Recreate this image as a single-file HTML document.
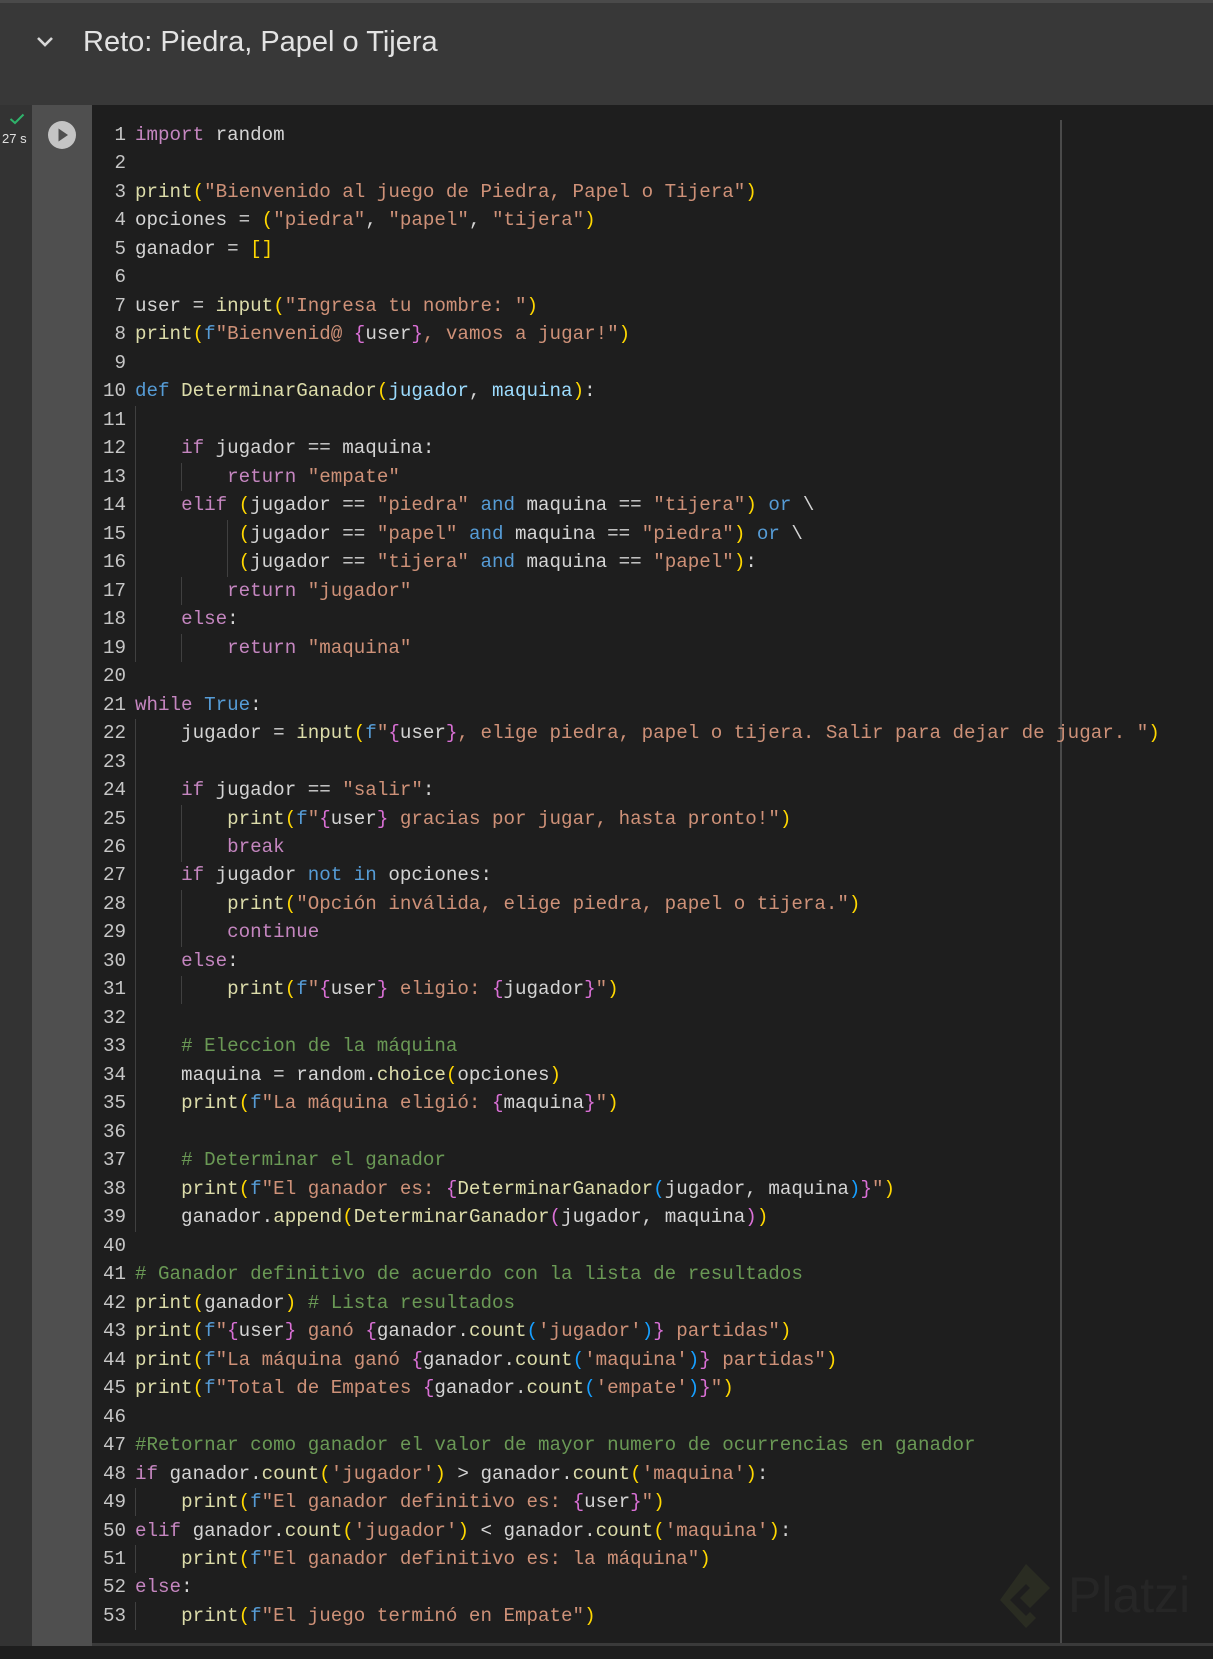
<!DOCTYPE html>
<html><head><meta charset="utf-8">
<style>
html,body{margin:0;padding:0;}
body{width:1213px;height:1646px;background:#1e1e1e;position:relative;overflow:hidden;font-family:"Liberation Mono",monospace;}
#hdr{position:absolute;left:0;top:0;width:1213px;height:105px;background:#383838;border-top:3px solid #4a4a4a;box-sizing:border-box;}
#title{position:absolute;left:83px;top:23px;font-family:"Liberation Sans",sans-serif;font-size:29px;color:#e3e3e3;}
#strip{position:absolute;left:0;top:105px;width:32px;height:1541px;background:#333333;}
#runcol{position:absolute;left:32px;top:105px;width:60px;height:1541px;background:#4f4f4f;}
#code{position:absolute;left:92px;top:105px;width:1121px;height:1538px;background:#1e1e1e;}
#bottom{position:absolute;left:92px;top:1643px;width:1121px;height:3px;background:#3a3a3a;}
#lines{position:absolute;left:0;top:121px;font-size:19.2px;line-height:28.48px;color:#d4d4d4;white-space:pre;}
.ln{position:absolute;left:80px;width:46px;text-align:right;color:#c6c6c6;}
.tx{position:absolute;left:135px;}
.k{color:#c586c0}.b{color:#569cd6}.s{color:#ce9178}.f{color:#dcdcaa}.p{color:#9cdcfe}.c{color:#6a9955}.y{color:#ffd700}.m{color:#da70d6}.l{color:#179fff}
.g{position:absolute;width:1px;background:#404040;}
</style></head><body>
<div id="hdr">
<svg style="position:absolute;left:36px;top:33px" width="18" height="12" viewBox="0 0 18 12"><path d="M2 2 L9 9 L16 2" stroke="#d8d8d8" stroke-width="2.6" fill="none"/></svg>
<div id="title">Reto: Piedra, Papel o Tijera</div>
</div>
<div id="strip">
<svg style="position:absolute;left:9px;top:8px" width="16" height="12" viewBox="0 0 16 12"><path d="M1.5 6 L6 10 L14.5 1.5" stroke="#2fb36b" stroke-width="2" fill="none"/></svg>
<div style="position:absolute;left:2px;top:26px;font-family:'Liberation Sans',sans-serif;font-size:13px;color:#e0e0e0">27 s</div>
</div>
<div id="runcol">
<svg style="position:absolute;left:16px;top:16px" width="28" height="28" viewBox="0 0 28 28"><circle cx="14" cy="14" r="14" fill="#c4c4c4"/><path d="M10.5 7.5 L20 14 L10.5 20.5 Z" fill="#4f4f4f"/></svg>
</div>
<div id="code"></div>
<div id="bottom"></div>
<div style="position:absolute;left:1060px;top:120px;width:2px;height:1523px;background:#4a4a4a"></div>

<!-- indent guides -->
<div class="g" style="left:135px;top:406px;height:256px"></div>
<div class="g" style="left:181px;top:463px;height:28px"></div>
<div class="g" style="left:227px;top:520px;height:57px"></div>
<div class="g" style="left:181px;top:577px;height:28px"></div>
<div class="g" style="left:181px;top:634px;height:28px"></div>
<div class="g" style="left:135px;top:719px;height:513px"></div>
<div class="g" style="left:181px;top:805px;height:57px"></div>
<div class="g" style="left:181px;top:890px;height:57px"></div>
<div class="g" style="left:181px;top:976px;height:28px"></div>
<div class="g" style="left:135px;top:1488px;height:28px"></div>
<div class="g" style="left:135px;top:1545px;height:28px"></div>
<div class="g" style="left:135px;top:1602px;height:28px"></div>

<!-- watermark -->
<svg style="position:absolute;left:996px;top:1560px" width="62" height="72" viewBox="0 0 62 72"><path d="M30 4 L54 28 L34 48 L24 38 L34 28 L30 24 L14 40 L30 56 L34 52 L40 58 L30 68 L4 40 Z" fill="#2a2c22"/></svg>
<div style="position:absolute;left:1068px;top:1566px;font-family:'Liberation Sans',sans-serif;font-size:50px;color:#262626">Platzi</div>

<div id="lines">
<div class="ln" style="top:0px">1</div><div class="tx" style="top:0px"><span class="k">import</span> random</div>
<div class="ln" style="top:28.48px">2</div>
<div class="ln" style="top:56.96px">3</div><div class="tx" style="top:56.96px"><span class="f">print</span><span class="y">(</span><span class="s">"Bienvenido al juego de Piedra, Papel o Tijera"</span><span class="y">)</span></div>
<div class="ln" style="top:85.44px">4</div><div class="tx" style="top:85.44px">opciones = <span class="y">(</span><span class="s">"piedra"</span>, <span class="s">"papel"</span>, <span class="s">"tijera"</span><span class="y">)</span></div>
<div class="ln" style="top:113.92px">5</div><div class="tx" style="top:113.92px">ganador = <span class="y">[]</span></div>
<div class="ln" style="top:142.4px">6</div>
<div class="ln" style="top:170.88px">7</div><div class="tx" style="top:170.88px">user = <span class="f">input</span><span class="y">(</span><span class="s">"Ingresa tu nombre: "</span><span class="y">)</span></div>
<div class="ln" style="top:199.36px">8</div><div class="tx" style="top:199.36px"><span class="f">print</span><span class="y">(</span><span class="b">f</span><span class="s">"Bienvenid@ </span><span class="m">{</span>user<span class="m">}</span><span class="s">, vamos a jugar!"</span><span class="y">)</span></div>
<div class="ln" style="top:227.84px">9</div>
<div class="ln" style="top:256.32px">10</div><div class="tx" style="top:256.32px"><span class="b">def</span> <span class="f">DeterminarGanador</span><span class="y">(</span><span class="p">jugador</span>, <span class="p">maquina</span><span class="y">)</span>:</div>
<div class="ln" style="top:284.8px">11</div>
<div class="ln" style="top:313.28px">12</div><div class="tx" style="top:313.28px">    <span class="k">if</span> jugador == maquina:</div>
<div class="ln" style="top:341.76px">13</div><div class="tx" style="top:341.76px">        <span class="k">return</span> <span class="s">"empate"</span></div>
<div class="ln" style="top:370.24px">14</div><div class="tx" style="top:370.24px">    <span class="k">elif</span> <span class="y">(</span>jugador == <span class="s">"piedra"</span> <span class="b">and</span> maquina == <span class="s">"tijera"</span><span class="y">)</span> <span class="b">or</span> \</div>
<div class="ln" style="top:398.72px">15</div><div class="tx" style="top:398.72px">         <span class="y">(</span>jugador == <span class="s">"papel"</span> <span class="b">and</span> maquina == <span class="s">"piedra"</span><span class="y">)</span> <span class="b">or</span> \</div>
<div class="ln" style="top:427.2px">16</div><div class="tx" style="top:427.2px">         <span class="y">(</span>jugador == <span class="s">"tijera"</span> <span class="b">and</span> maquina == <span class="s">"papel"</span><span class="y">)</span>:</div>
<div class="ln" style="top:455.68px">17</div><div class="tx" style="top:455.68px">        <span class="k">return</span> <span class="s">"jugador"</span></div>
<div class="ln" style="top:484.16px">18</div><div class="tx" style="top:484.16px">    <span class="k">else</span>:</div>
<div class="ln" style="top:512.64px">19</div><div class="tx" style="top:512.64px">        <span class="k">return</span> <span class="s">"maquina"</span></div>
<div class="ln" style="top:541.12px">20</div>
<div class="ln" style="top:569.6px">21</div><div class="tx" style="top:569.6px"><span class="k">while</span> <span class="b">True</span>:</div>
<div class="ln" style="top:598.08px">22</div><div class="tx" style="top:598.08px">    jugador = <span class="f">input</span><span class="y">(</span><span class="b">f</span><span class="s">"</span><span class="m">{</span>user<span class="m">}</span><span class="s">, elige piedra, papel o tijera. Salir para dejar de jugar. "</span><span class="y">)</span></div>
<div class="ln" style="top:626.56px">23</div>
<div class="ln" style="top:655.04px">24</div><div class="tx" style="top:655.04px">    <span class="k">if</span> jugador == <span class="s">"salir"</span>:</div>
<div class="ln" style="top:683.52px">25</div><div class="tx" style="top:683.52px">        <span class="f">print</span><span class="y">(</span><span class="b">f</span><span class="s">"</span><span class="m">{</span>user<span class="m">}</span><span class="s"> gracias por jugar, hasta pronto!"</span><span class="y">)</span></div>
<div class="ln" style="top:712px">26</div><div class="tx" style="top:712px">        <span class="k">break</span></div>
<div class="ln" style="top:740.48px">27</div><div class="tx" style="top:740.48px">    <span class="k">if</span> jugador <span class="b">not in</span> opciones:</div>
<div class="ln" style="top:768.96px">28</div><div class="tx" style="top:768.96px">        <span class="f">print</span><span class="y">(</span><span class="s">"Opción inválida, elige piedra, papel o tijera."</span><span class="y">)</span></div>
<div class="ln" style="top:797.44px">29</div><div class="tx" style="top:797.44px">        <span class="k">continue</span></div>
<div class="ln" style="top:825.92px">30</div><div class="tx" style="top:825.92px">    <span class="k">else</span>:</div>
<div class="ln" style="top:854.4px">31</div><div class="tx" style="top:854.4px">        <span class="f">print</span><span class="y">(</span><span class="b">f</span><span class="s">"</span><span class="m">{</span>user<span class="m">}</span><span class="s"> eligio: </span><span class="m">{</span>jugador<span class="m">}</span><span class="s">"</span><span class="y">)</span></div>
<div class="ln" style="top:882.88px">32</div>
<div class="ln" style="top:911.36px">33</div><div class="tx" style="top:911.36px">    <span class="c"># Eleccion de la máquina</span></div>
<div class="ln" style="top:939.84px">34</div><div class="tx" style="top:939.84px">    maquina = random.<span class="f">choice</span><span class="y">(</span>opciones<span class="y">)</span></div>
<div class="ln" style="top:968.32px">35</div><div class="tx" style="top:968.32px">    <span class="f">print</span><span class="y">(</span><span class="b">f</span><span class="s">"La máquina eligió: </span><span class="m">{</span>maquina<span class="m">}</span><span class="s">"</span><span class="y">)</span></div>
<div class="ln" style="top:996.8px">36</div>
<div class="ln" style="top:1025.28px">37</div><div class="tx" style="top:1025.28px">    <span class="c"># Determinar el ganador</span></div>
<div class="ln" style="top:1053.76px">38</div><div class="tx" style="top:1053.76px">    <span class="f">print</span><span class="y">(</span><span class="b">f</span><span class="s">"El ganador es: </span><span class="m">{</span><span class="f">DeterminarGanador</span><span class="l">(</span>jugador, maquina<span class="l">)</span><span class="m">}</span><span class="s">"</span><span class="y">)</span></div>
<div class="ln" style="top:1082.24px">39</div><div class="tx" style="top:1082.24px">    ganador.<span class="f">append</span><span class="y">(</span><span class="f">DeterminarGanador</span><span class="m">(</span>jugador, maquina<span class="m">)</span><span class="y">)</span></div>
<div class="ln" style="top:1110.72px">40</div>
<div class="ln" style="top:1139.2px">41</div><div class="tx" style="top:1139.2px"><span class="c"># Ganador definitivo de acuerdo con la lista de resultados</span></div>
<div class="ln" style="top:1167.68px">42</div><div class="tx" style="top:1167.68px"><span class="f">print</span><span class="y">(</span>ganador<span class="y">)</span> <span class="c"># Lista resultados</span></div>
<div class="ln" style="top:1196.16px">43</div><div class="tx" style="top:1196.16px"><span class="f">print</span><span class="y">(</span><span class="b">f</span><span class="s">"</span><span class="m">{</span>user<span class="m">}</span><span class="s"> ganó </span><span class="m">{</span>ganador.<span class="f">count</span><span class="l">(</span><span class="s">'jugador'</span><span class="l">)</span><span class="m">}</span><span class="s"> partidas"</span><span class="y">)</span></div>
<div class="ln" style="top:1224.64px">44</div><div class="tx" style="top:1224.64px"><span class="f">print</span><span class="y">(</span><span class="b">f</span><span class="s">"La máquina ganó </span><span class="m">{</span>ganador.<span class="f">count</span><span class="l">(</span><span class="s">'maquina'</span><span class="l">)</span><span class="m">}</span><span class="s"> partidas"</span><span class="y">)</span></div>
<div class="ln" style="top:1253.12px">45</div><div class="tx" style="top:1253.12px"><span class="f">print</span><span class="y">(</span><span class="b">f</span><span class="s">"Total de Empates </span><span class="m">{</span>ganador.<span class="f">count</span><span class="l">(</span><span class="s">'empate'</span><span class="l">)</span><span class="m">}</span><span class="s">"</span><span class="y">)</span></div>
<div class="ln" style="top:1281.6px">46</div>
<div class="ln" style="top:1310.08px">47</div><div class="tx" style="top:1310.08px"><span class="c">#Retornar como ganador el valor de mayor numero de ocurrencias en ganador</span></div>
<div class="ln" style="top:1338.56px">48</div><div class="tx" style="top:1338.56px"><span class="k">if</span> ganador.<span class="f">count</span><span class="y">(</span><span class="s">'jugador'</span><span class="y">)</span> &gt; ganador.<span class="f">count</span><span class="y">(</span><span class="s">'maquina'</span><span class="y">)</span>:</div>
<div class="ln" style="top:1367.04px">49</div><div class="tx" style="top:1367.04px">    <span class="f">print</span><span class="y">(</span><span class="b">f</span><span class="s">"El ganador definitivo es: </span><span class="m">{</span>user<span class="m">}</span><span class="s">"</span><span class="y">)</span></div>
<div class="ln" style="top:1395.52px">50</div><div class="tx" style="top:1395.52px"><span class="k">elif</span> ganador.<span class="f">count</span><span class="y">(</span><span class="s">'jugador'</span><span class="y">)</span> &lt; ganador.<span class="f">count</span><span class="y">(</span><span class="s">'maquina'</span><span class="y">)</span>:</div>
<div class="ln" style="top:1424px">51</div><div class="tx" style="top:1424px">    <span class="f">print</span><span class="y">(</span><span class="b">f</span><span class="s">"El ganador definitivo es: la máquina"</span><span class="y">)</span></div>
<div class="ln" style="top:1452.48px">52</div><div class="tx" style="top:1452.48px"><span class="k">else</span>:</div>
<div class="ln" style="top:1480.96px">53</div><div class="tx" style="top:1480.96px">    <span class="f">print</span><span class="y">(</span><span class="b">f</span><span class="s">"El juego terminó en Empate"</span><span class="y">)</span></div>
</div>
</body></html>
